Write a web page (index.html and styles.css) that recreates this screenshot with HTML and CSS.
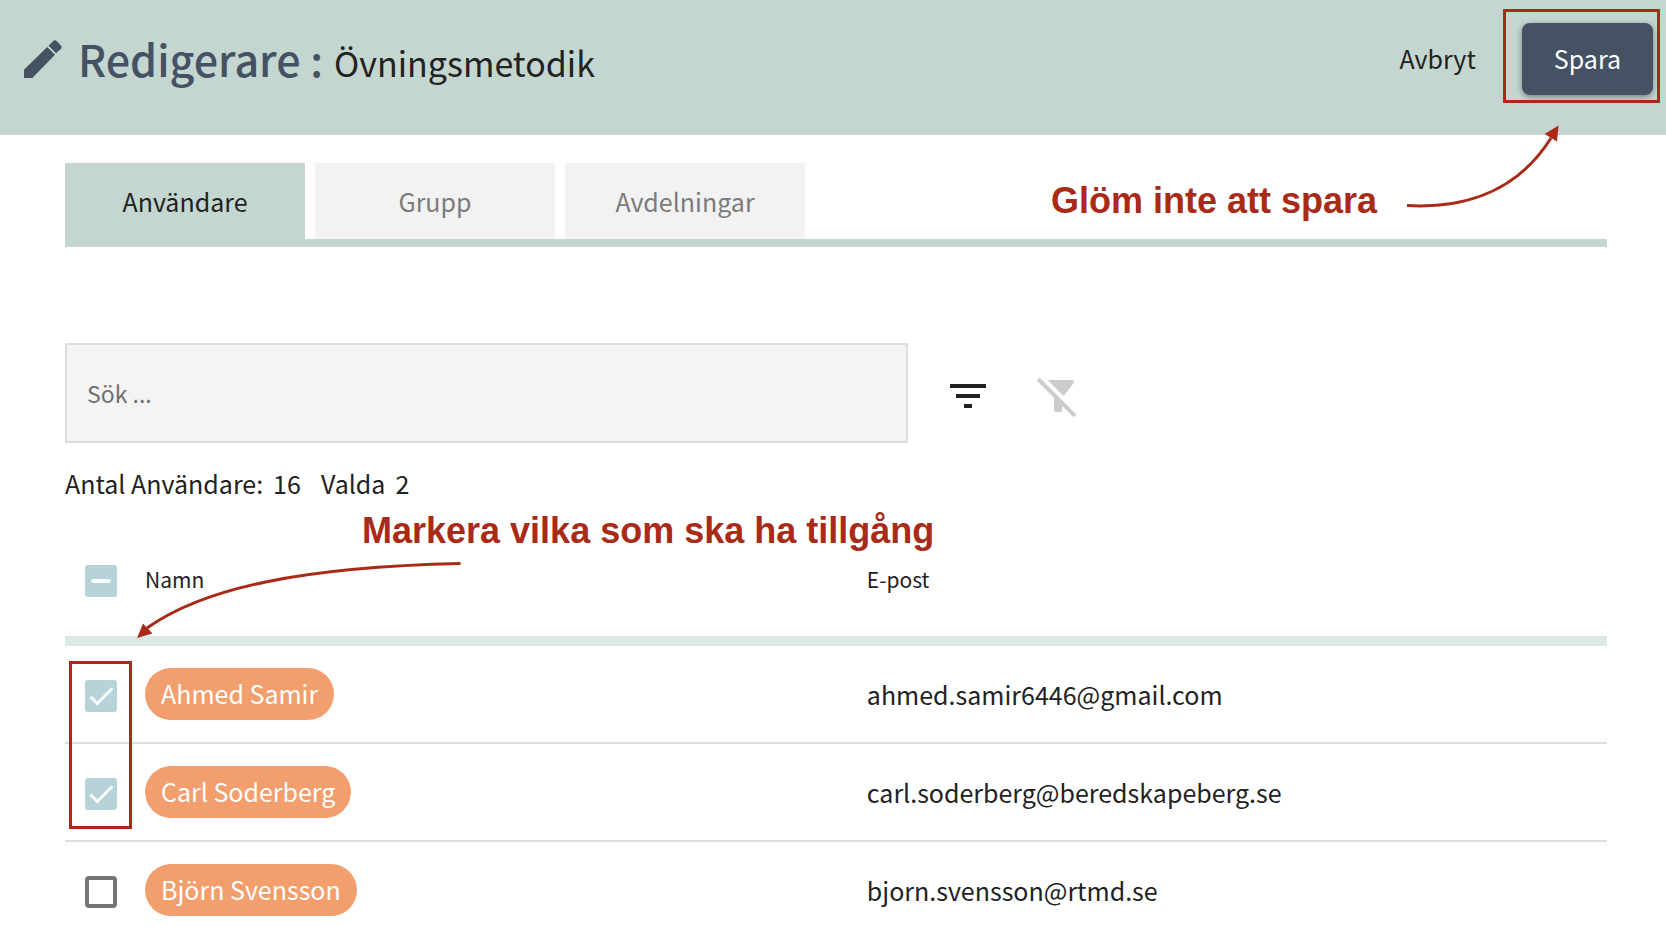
FILE: index.html
```html
<!DOCTYPE html>
<html lang="sv">
<head>
    <meta charset="UTF-8">
    <meta name="viewport" content="width=device-width, initial-scale=1.0">
    <title>Redigerare : Övningsmetodik</title>
    <link rel="stylesheet" href="styles.css">
</head>
<body>
    <header class="topbar">
        <svg class="pencil" viewBox="0 0 38 38" aria-hidden="true">
            <path d="M0 29.700V38h8.300L31 14.800 23.200 7zM32 13.300l4.900-4.400a2.600 2.600 0 0 0 0-3.400L32.600 1.100a2.600 2.600 0 0 0-3.400 0L24.600 5.700z"/>
        </svg>
        <h1>Redigerare :</h1>
        <span class="subject">Övningsmetodik</span>
        <div class="actions">
            <button type="button" class="btn-cancel">Avbryt</button>
            <div class="save-mark">
                <button type="button" class="btn-save">Spara</button>
            </div>
        </div>
    </header>

    <main>
        <div class="tabs" role="tablist">
            <button type="button" class="tab active" role="tab" aria-selected="true">Användare</button>
            <button type="button" class="tab" role="tab" aria-selected="false">Grupp</button>
            <button type="button" class="tab" role="tab" aria-selected="false">Avdelningar</button>
        </div>

        <div class="search-row">
            <input type="text" class="search" placeholder="Sök ..." aria-label="Sök">
            <button type="button" class="icon-btn" aria-label="Filtrera">
                <svg viewBox="0 0 24 24"><path d="M10 18h4v-2h-4v2zM3 6v2h18V6H3zm3 7h12v-2H6v2z"/></svg>
            </button>
            <button type="button" class="icon-btn off" aria-label="Rensa filter">
                <svg viewBox="0 0 24 24"><path d="M19.790 5.610C20.300 4.950 19.830 4 19 4H6.830l7.970 7.970 4.990-6.360zM2.810 2.810L1.390 4.220 10 12.830V19c0 .55.45 1 1 1h2c.55 0 1-.45 1-1v-2.170l5.780 5.780 1.410-1.410L2.810 2.810z"/></svg>
            </button>
        </div>

        <p class="counts"><span>Antal Användare:</span><span>16</span><span class="selected">Valda</span><span>2</span></p>

        <table>
            <colgroup>
                <col class="col-check">
                <col>
                <col class="col-mail">
            </colgroup>
            <thead>
                <tr>
                    <th><input type="checkbox" class="check partial" aria-label="Markera alla"></th>
                    <th>Namn</th>
                    <th>E-post</th>
                </tr>
            </thead>
            <tbody>
                <tr>
                    <td><input type="checkbox" class="check" id="user1" checked></td>
                    <td><label class="chip" for="user1">Ahmed Samir</label></td>
                    <td>ahmed.samir6446@gmail.com</td>
                </tr>
                <tr>
                    <td><input type="checkbox" class="check" id="user2" checked></td>
                    <td><label class="chip" for="user2">Carl Soderberg</label></td>
                    <td>carl.soderberg@beredskapeberg.se</td>
                </tr>
                <tr>
                    <td><input type="checkbox" class="check" id="user3"></td>
                    <td><label class="chip" for="user3">Björn Svensson</label></td>
                    <td>bjorn.svensson@rtmd.se</td>
                </tr>
            </tbody>
        </table>
    </main>

    <!-- Instruktioner ovanpå sidan -->
    <div class="note note-save">Glöm inte att spara</div>
    <svg class="arrow arrow-save" viewBox="0 0 160 90" aria-hidden="true">
        <path class="line" d="M1 85.500C62 89 113 69 145 18"/>
        <path class="head" d="M152.500 5.500L138.500 14l12.500 7.500z"/>
    </svg>
    <div class="note note-select">Markera vilka som ska ha tillgång</div>
    <svg class="arrow arrow-select" viewBox="0 0 330 80" aria-hidden="true">
        <path class="line" d="M326.500 3.500C170 7 71 27 13 68"/>
        <path class="head" d="M3 78L9 63.500l9.500 10z"/>
    </svg>
    <div class="select-mark"></div>

    <script>
        document.querySelector('.partial').indeterminate = true;
    </script>
</body>
</html>
```
FILE: styles.css
```css
*,
*::after {
    box-sizing: border-box;
}

body {
    margin: 0;
    position: relative;
    min-height: 100vh;
    overflow-x: hidden;
    font-family: "Noto Sans CJK SC", sans-serif;
    font-size: 25px;
    line-height: 36px;
    color: #222;
    background-color: #fff;
}

button {
    font: inherit;
    border: none;
    cursor: pointer;
}

.topbar {
    display: flex;
    align-items: baseline;
    height: 135px;
    padding: 23px 13px 0 24px;
    background-color: #c4d6d0;
}

.pencil {
    align-self: flex-start;
    width: 38px;
    height: 38px;
    margin: 17px 16px 0 0;
    fill: #445263;
}

h1 {
    margin: 0 11px 0 0;
    font-size: 43px;
    font-weight: 500;
    line-height: 70px;
    color: #445263;
}

.subject {
    font-size: 34px;
}

.actions {
    display: flex;
    align-items: center;
    align-self: flex-start;
    margin-left: auto;
}

.btn-cancel {
    padding: 17px 18px 19px;
    margin-right: 28px;
    background: none;
    color: #222;
}

.save-mark {
    position: relative;
}

.save-mark::after {
    content: "";
    position: absolute;
    inset: -14px -7px -8px -19px;
    border: 3px solid #a92b17;
    pointer-events: none;
}

.btn-save {
    display: block;
    height: 72px;
    padding: 0 32px 2px;
    border-radius: 8px;
    background-color: #445263;
    color: #fff;
    box-shadow: 0 2px 6px rgba(0, 0, 0, 0.4);
}

main {
    padding: 28px 59px 0 65px;
}

.tabs {
    display: flex;
    gap: 10px;
    border-bottom: 8px solid #c4d6d0;
}

.tab {
    width: 240px;
    height: 76px;
    padding-bottom: 2px;
    background-color: #f2f2f2;
    color: #7b7b7b;
}

.tab.active {
    background-color: #c4d6d0;
    color: #222;
}

.search-row {
    display: flex;
    align-items: center;
    margin-top: 96px;
}

.search {
    flex: 1;
    max-width: 843px;
    height: 100px;
    margin-right: 20px;
    padding: 0 20px;
    border: 2px solid #ddd;
    background-color: #f4f4f4;
    font: inherit;
    font-size: 23px;
    color: #222;
}

.search::placeholder {
    color: #6f6f6f;
}

.icon-btn {
    width: 80px;
    height: 80px;
    margin-right: 10px;
    padding: 19px 16px 13px;
    background: none;
}

.icon-btn svg {
    display: block;
    width: 48px;
    height: 48px;
    fill: #222;
}

.icon-btn.off svg {
    fill: #ccc;
}

.counts {
    display: flex;
    gap: 10px;
    margin: 22px 0 0;
}

.selected {
    margin-left: 10px;
}

table {
    width: 100%;
    margin-top: 20px;
    border-collapse: separate;
    border-spacing: 0;
    table-layout: fixed;
}

.col-check {
    width: 80px;
}

.col-mail {
    width: 48%;
}

th {
    height: 125px;
    padding: 0;
    border-bottom: 10px solid #dce8e3;
    font-size: 21px;
    font-weight: 400;
    text-align: left;
}

td {
    height: 98px;
    padding: 0;
    border-bottom: 2px solid #ddd;
}

.check {
    appearance: none;
    display: block;
    position: relative;
    width: 32px;
    height: 32px;
    margin: 4px 0 0 20px;
    border: 4px solid #757575;
    border-radius: 4px;
}

.check:checked,
.check:indeterminate {
    border: none;
    border-radius: 3px;
    background-color: #b5d3d8;
}

.check:checked::after {
    content: "";
    position: absolute;
    left: 5px;
    top: 8px;
    width: 23px;
    height: 11px;
    border-left: 3px solid #fafafa;
    border-bottom: 3px solid #fafafa;
    transform: rotate(-45deg);
}

.check:indeterminate::after {
    content: "";
    position: absolute;
    left: 6px;
    top: 14px;
    width: 20px;
    height: 4px;
    border-radius: 2px;
    background-color: #fafafa;
}

.chip {
    display: inline-block;
    padding: 7px 16px 9px;
    border-radius: 26px;
    background-color: #f29e6d;
    color: #fff;
    vertical-align: middle;
}

.note {
    position: absolute;
    font-family: "Liberation Sans", Arial, sans-serif;
    font-size: 36px;
    font-weight: bold;
    line-height: 40px;
    color: #a92b17;
    white-space: nowrap;
}

.note-save {
    top: 181px;
    right: 289px;
}

.note-select {
    top: 511px;
    left: 362px;
}

.arrow {
    position: absolute;
    pointer-events: none;
}

.arrow .line {
    fill: none;
    stroke: #a92b17;
    stroke-width: 3;
}

.arrow .head {
    fill: #a92b17;
}

.arrow-save {
    top: 120px;
    right: 100px;
    width: 160px;
    height: 90px;
}

.arrow-select {
    top: 560px;
    left: 134px;
    width: 330px;
    height: 80px;
}

.select-mark {
    position: absolute;
    top: 661px;
    left: 69px;
    width: 63px;
    height: 168px;
    border: 3px solid #a92b17;
    pointer-events: none;
}
```
